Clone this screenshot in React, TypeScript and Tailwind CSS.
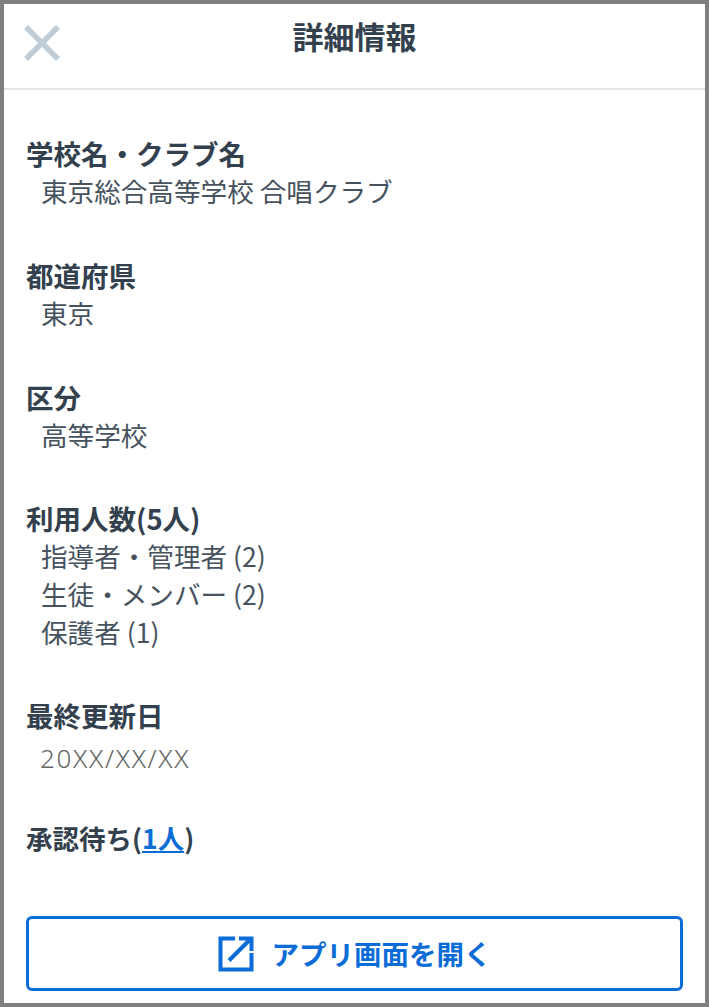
const FONT = "font-['Noto_Sans_CJK_JP','Noto_Sans',sans-serif]";

// ── Detail section ────────────────────────────────────────────────

function Section({ label, lines, className = "" }: { label: string; lines: string[]; className?: string }) {
  return (
    <section className={`mb-[46px] ${className}`}>
      <h2 className="h-[38px] text-[27.5px] leading-[38px] font-bold text-[#33404d]">{label}</h2>
      {lines.map((line) => (
        <p key={line} className="h-[38px] pl-[15px] text-[26.6px] leading-[38px] text-[#46525e] whitespace-nowrap">
          {line}
        </p>
      ))}
    </section>
  );
}

function OpenIcon() {
  return (
    <svg className="h-9 w-9" viewBox="0 0 36 36" fill="none" stroke="#0a6cd6" strokeWidth="4">
      <path d="M17 2.5H2.5v31h31V17" />
      <path d="M11 24.5L32 3.5" />
      <path d="M21 2.5h12.5V15" />
    </svg>
  );
}

export default function App() {
  return (
    <div className={`${FONT} flex h-[1007px] w-[709px] flex-col border-4 border-[#7f7f7f] bg-white`}>
      <header className="relative flex h-[86px] shrink-0 items-start justify-center border-b-2 border-[#e2e5e8]">
        <svg className="absolute left-[20px] top-[21px] h-9 w-9" viewBox="0 0 36 36" fill="none" stroke="#c0ccd6" strokeWidth="5.5">
          <path d="M2 2l32 32M34 2L2 34" />
        </svg>
        <h1 className="mt-[10px] text-[31px] leading-[44px] font-bold text-[#33404d]">詳細情報</h1>
      </header>

      <main className="flex flex-1 flex-col px-[22px] pt-[44px]">
        <Section label="学校名・クラブ名" lines={["東京総合高等学校 合唱クラブ"]} />
        <Section label="都道府県" lines={["東京"]} />
        <Section label="区分" lines={["高等学校"]} />
        <Section label="利用人数(5人)" lines={["指導者・管理者 (2)", "生徒・メンバー (2)", "保護者 (1)"]} className="-mt-px" />

        <section className="mb-[42px] -mt-px">
          <h2 className="h-[38px] text-[27.5px] leading-[38px] font-bold text-[#33404d]">最終更新日</h2>
          <p className="mt-[5px] h-[38px] pl-[14px] font-['Noto_Sans',sans-serif] text-[26px] leading-[38px] tracking-[1.7px] font-light text-[#666666]">
            20XX/XX/XX
          </p>
        </section>

        <p className="h-[38px] text-[26.5px] leading-[38px] font-bold text-[#33404d]">
          承認待ち(<a className="text-[#0a6cd6] underline" href="#">1人</a>)
        </p>

        <button
          type="button"
          className="mt-auto mb-[12px] flex h-[75px] w-[657px] items-center justify-center gap-[18px] rounded-[6px] border-[3px] border-[#0a6cd6] text-[27.5px] font-bold text-[#0a6cd6]"
        >
          <OpenIcon />
          アプリ画面を開く
        </button>
      </main>
    </div>
  );
}
